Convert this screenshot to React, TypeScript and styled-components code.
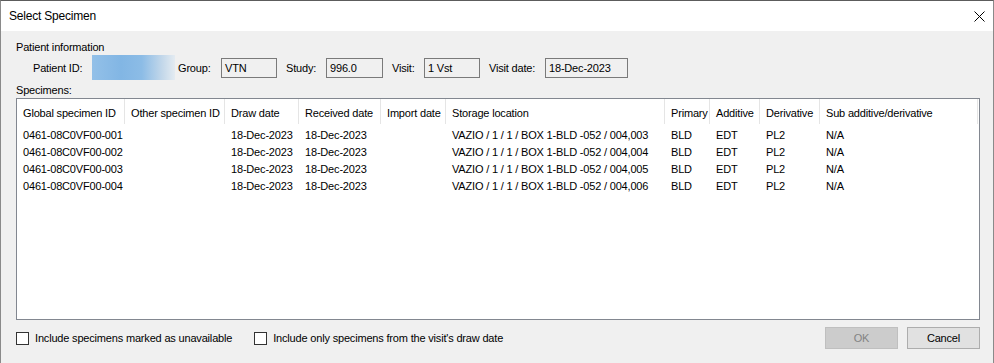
import React from 'react';
import styled, { createGlobalStyle } from 'styled-components';

const GlobalStyle = createGlobalStyle`
  html, body {
    margin: 0;
    padding: 0;
    background: #ffffff;
  }
  body {
    font-family: "Liberation Sans", Arial, sans-serif;
    font-size: 11px;
    letter-spacing: -0.18px;
    color: #000;
  }
`;

const Window = styled.div`
  width: 994px;
  height: 363px;
  box-sizing: border-box;
  border-top: 1px solid #5c5c5c;
  border-left: 1px solid #8a8a8a;
  border-right: 1px solid #8a8a8a;
  display: flex;
  flex-direction: column;
  background: #f0f0f0;
  overflow: hidden;
`;

const TitleBar = styled.div`
  height: 30px;
  flex: none;
  background: #ffffff;
  display: flex;
  align-items: center;
  justify-content: space-between;
  padding: 0 4px 0 8px;
`;

const Title = styled.span`
  font-size: 12px;
  letter-spacing: -0.2px;
  margin-top: -1px;
`;

const CloseButton = styled.div`
  width: 20px;
  height: 20px;
  display: flex;
  align-items: center;
  justify-content: center;
`;

const Body = styled.div`
  flex: 1;
  display: flex;
  flex-direction: column;
  padding: 9px 13px 0 15px;
`;

const SectionLabel = styled.div`
  height: 14px;
  line-height: 14px;
`;

const InfoRow = styled.div`
  display: flex;
  align-items: center;
  height: 25px;
  margin-top: 1px;
  padding-left: 17px;
`;

const FieldLabel = styled.span<{ $w: number }>`
  width: ${p => p.$w}px;
  flex: none;
`;

const Blurred = styled.div`
  width: 83px;
  height: 25px;
  margin-right: 3px;
  background: linear-gradient(90deg, #93c0e8 0%, #82b6e4 35%, #8cbce6 60%, #c4d8ea 85%, #e4ebf1 100%);
`;

const ReadBox = styled.div<{ $w: number; $mr: number }>`
  width: ${p => p.$w}px;
  height: 20px;
  box-sizing: border-box;
  border: 1px solid #7a7a7a;
  background: #f0f0f0;
  padding: 3px 3px 0;
  margin-right: ${p => p.$mr}px;
  flex: none;
`;

const SpecimensLabel = styled(SectionLabel)`
  margin-top: 3px;
`;

const ListBox = styled.div`
  margin-top: 1px;
  height: 222px;
  box-sizing: border-box;
  border: 1px solid #828790;
  background: #ffffff;
  display: flex;
  flex-direction: column;
`;

const cols = '108px 100px 74px 82px 65px 219px 45px 50px 60px 158px';

const HeaderRow = styled.div`
  display: grid;
  grid-template-columns: ${cols};
  height: 25px;
  margin-bottom: 2px;
`;

const HeaderCell = styled.div`
  padding: 2px 0 0 6px;
  border-right: 1px solid #e5e5e5;
  display: flex;
  align-items: center;
  white-space: nowrap;
  overflow: hidden;
`;

const Row = styled.div`
  display: grid;
  grid-template-columns: ${cols};
  height: 17px;
  align-items: center;
`;

const Cell = styled.div`
  padding-left: 6px;
  white-space: nowrap;
  overflow: hidden;
`;

const Footer = styled.div`
  display: flex;
  align-items: center;
  margin-top: 7px;
  height: 22px;
`;

const CheckLabel = styled.label<{ $mr: number }>`
  display: flex;
  align-items: center;
  margin-right: ${p => p.$mr}px;
  white-space: nowrap;
`;

const Box = styled.span`
  width: 13px;
  height: 13px;
  box-sizing: border-box;
  border: 1px solid #333333;
  background: #ffffff;
  margin-right: 6px;
  flex: none;
`;

const Spacer = styled.div`
  flex: 1;
`;

const Button = styled.button<{ $disabled?: boolean }>`
  width: 73px;
  height: 22px;
  box-sizing: border-box;
  font-family: "Liberation Sans", Arial, sans-serif;
  font-size: 11px;
  letter-spacing: -0.18px;
  padding: 0;
  margin-left: 9px;
  border: 1px solid ${p => (p.$disabled ? '#bfbfbf' : '#adadad')};
  background: ${p => (p.$disabled ? '#cccccc' : '#e1e1e1')};
  color: ${p => (p.$disabled ? '#838383' : '#000')};
`;

const headers = [
  'Global specimen ID',
  'Other specimen ID',
  'Draw date',
  'Received date',
  'Import date',
  'Storage location',
  'Primary',
  'Additive',
  'Derivative',
  'Sub additive/derivative',
];

const rows = ['003', '004', '005', '006'].map((pos, i) => [
  `0461-08C0VF00-00${i + 1}`,
  '',
  '18-Dec-2023',
  '18-Dec-2023',
  '',
  `VAZIO / 1 / 1 / BOX 1-BLD -052 / 004,${pos}`,
  'BLD',
  'EDT',
  'PL2',
  'N/A',
]);

const App = () => (
  <>
    <GlobalStyle />
    <Window>
      <TitleBar>
        <Title>Select Specimen</Title>
        <CloseButton>
          <svg width="11" height="11" viewBox="0 0 11 11">
            <path d="M0.5 0.5 L10.5 10.5 M10.5 0.5 L0.5 10.5" stroke="#000" strokeWidth="1" />
          </svg>
        </CloseButton>
      </TitleBar>
      <Body>
        <SectionLabel>Patient information</SectionLabel>
        <InfoRow>
          <FieldLabel $w={59}>Patient ID:</FieldLabel>
          <Blurred />
          <FieldLabel $w={43}>Group:</FieldLabel>
          <ReadBox $w={56} $mr={9}>VTN</ReadBox>
          <FieldLabel $w={40}>Study:</FieldLabel>
          <ReadBox $w={57} $mr={9}>996.0</ReadBox>
          <FieldLabel $w={32}>Visit:</FieldLabel>
          <ReadBox $w={56} $mr={9}>1 Vst</ReadBox>
          <FieldLabel $w={56}>Visit date:</FieldLabel>
          <ReadBox $w={83} $mr={0}>18-Dec-2023</ReadBox>
        </InfoRow>
        <SpecimensLabel>Specimens:</SpecimensLabel>
        <ListBox>
          <HeaderRow>
            {headers.map(h => (
              <HeaderCell key={h}>{h}</HeaderCell>
            ))}
          </HeaderRow>
          {rows.map((r, i) => (
            <Row key={i}>
              {r.map((c, j) => (
                <Cell key={j}>{c}</Cell>
              ))}
            </Row>
          ))}
        </ListBox>
        <Footer>
          <CheckLabel $mr={22}>
            <Box />
            Include specimens marked as unavailable
          </CheckLabel>
          <CheckLabel $mr={0}>
            <Box />
            Include only specimens from the visit's draw date
          </CheckLabel>
          <Spacer />
          <Button $disabled>OK</Button>
          <Button>Cancel</Button>
        </Footer>
      </Body>
    </Window>
  </>
);

export default App;
